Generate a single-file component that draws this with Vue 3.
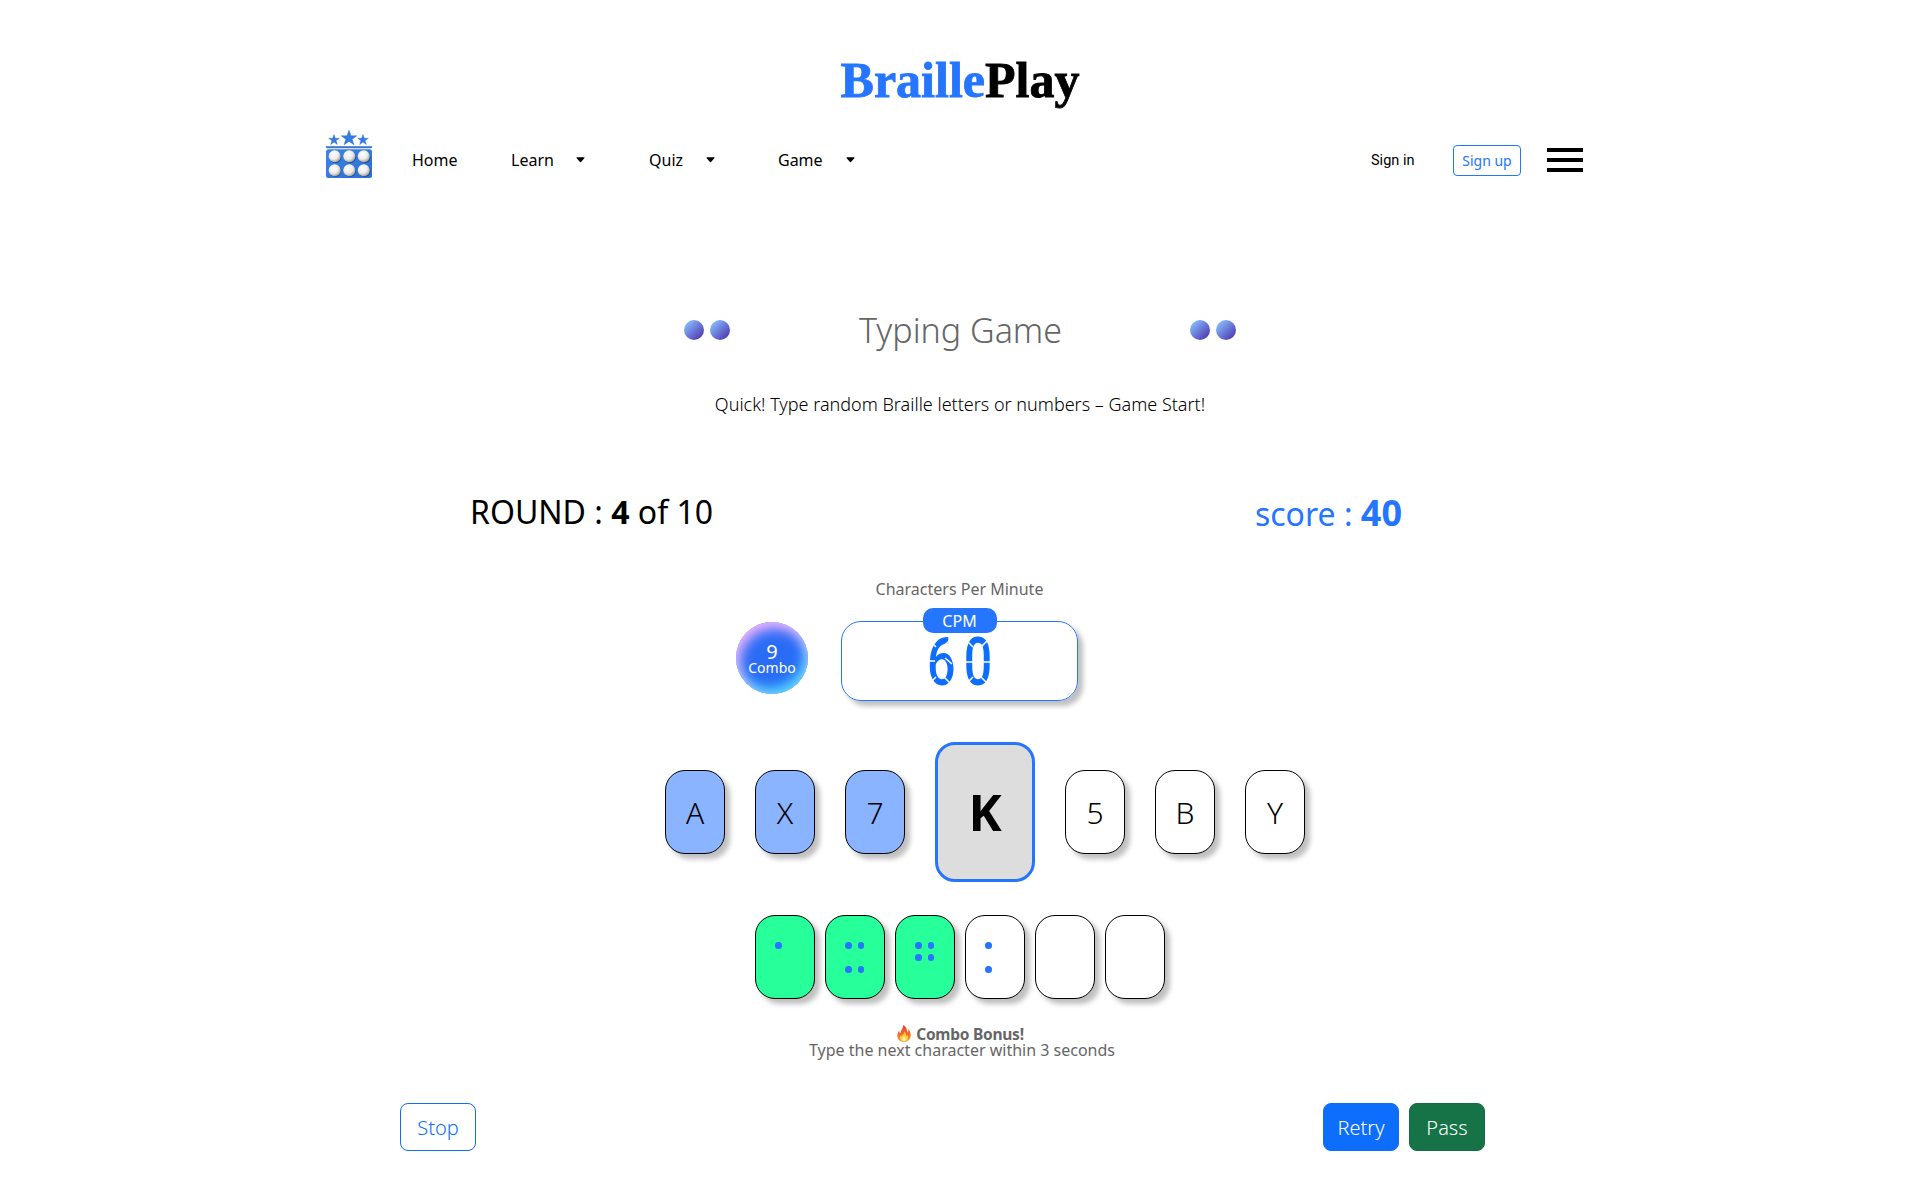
<script setup>
const menu = [
  { label: 'Home', width: 99, caret: false },
  { label: 'Learn', width: 138, caret: true, gap: 22 },
  { label: 'Quiz', width: 129, caret: true, gap: 23 },
  { label: 'Game', width: 80, caret: true, gap: 23 },
]
const letters = [
  { char: 'A', state: 'done' },
  { char: 'X', state: 'done' },
  { char: '7', state: 'done' },
  { char: 'K', state: 'current' },
  { char: '5', state: '' },
  { char: 'B', state: '' },
  { char: 'Y', state: '' },
]
// Each cell lists its six dots row by row.
const cells = [
  { dots: [1, 0, 0, 0, 0, 0], correct: true },
  { dots: [1, 1, 0, 0, 1, 1], correct: true },
  { dots: [1, 1, 1, 1, 0, 0], correct: true },
  { dots: [1, 0, 0, 0, 1, 0], correct: false },
  { dots: [0, 0, 0, 0, 0, 0], correct: false },
  { dots: [0, 0, 0, 0, 0, 0], correct: false },
]
</script>

<template>
  <div class="page">
    <header>
      <div class="wordmark"><span class="blue">Braille</span><span>Play</span></div>
      <nav>
        <svg class="logo" width="48" height="50" viewBox="0 0 48 50">
          <defs>
            <radialGradient id="ball" cx="0.4" cy="0.35" r="0.65">
              <stop offset="0" stop-color="#fff" />
              <stop offset="0.6" stop-color="#eeecea" />
              <stop offset="1" stop-color="#aaa59f" />
            </radialGradient>
            <linearGradient id="plate" x1="0" y1="0" x2="1" y2="1">
              <stop offset="0" stop-color="#3b86e8" />
              <stop offset="1" stop-color="#2a6fd2" />
            </linearGradient>
          </defs>
          <g fill="#317de4" stroke="#2a65b5" stroke-width="0.4">
            <path d="M24 .2l2 5.600h5.800l-4.600 3.400 1.800 5.600L24 11.400l-5 3.400 1.800-5.600L16.200 5.800h5.800z" />
            <path d="M9 4.500l1.300 3.800h4l-3.200 2.300 1.200 3.900-3.300-2.400-3.300 2.400 1.200-3.900-3.200-2.300h4z" />
            <path d="M38 4.500l1.300 3.800h4l-3.200 2.300 1.200 3.900-3.300-2.400-3.300 2.400 1.200-3.900-3.200-2.300h4z" />
          </g>
          <rect x="1" y="16.200" width="46" height="1.600" fill="#2f78da" />
          <rect x="1.500" y="17.600" width="45" height="0.600" fill="#245196" />
          <rect x="1" y="19.300" width="46" height="28.700" rx="2.500" fill="url(#plate)" />
          <g fill="#174b98" opacity="0.75">
            <circle cx="10.300" cy="27.200" r="6.100" /><circle cx="25" cy="27.200" r="6.100" /><circle cx="39.600" cy="27.200" r="6.100" />
            <circle cx="10.300" cy="41" r="6.100" /><circle cx="25" cy="41" r="6.100" /><circle cx="39.600" cy="41" r="6.100" />
          </g>
          <g fill="url(#ball)">
            <circle cx="9.700" cy="26.200" r="6" /><circle cx="24.300" cy="26.200" r="6" /><circle cx="38.800" cy="26.200" r="6" />
            <circle cx="9.700" cy="40.200" r="6" /><circle cx="24.300" cy="40.200" r="6" /><circle cx="38.800" cy="40.200" r="6" />
          </g>
        </svg>
        <ul class="menu">
          <li v-for="m in menu" :key="m.label" :style="{ width: m.width + 'px' }">
            {{ m.label }}
            <svg v-if="m.caret" :style="{ marginLeft: m.gap + 'px' }" width="9" height="6" viewBox="0 0 9 6">
              <path d="M.5 1Q.3 .3 1 .3H8Q8.700 .3 8.500 1L5 5Q4.500 5.500 4 5Z" />
            </svg>
          </li>
        </ul>
        <a class="signin">Sign in</a>
        <button class="signup">Sign up</button>
        <div class="burger"><i></i><i></i><i></i></div>
      </nav>
    </header>

    <div class="title">
      <div class="pair"><i></i><i></i></div>
      <h1>Typing Game</h1>
      <div class="pair"><i></i><i></i></div>
    </div>
    <p class="intro">Quick! Type random Braille letters or numbers – Game Start!</p>

    <div class="stats">
      <div class="round">ROUND : <b>4</b> of 10</div>
      <div class="score">score : <b>40</b></div>
    </div>

    <p class="caption">Characters Per Minute</p>
    <div class="meter">
      <div class="combo"><span class="count">9</span><span>Combo</span></div>
      <div class="cpm">
        <div class="tag">CPM</div>
        <svg class="readout" width="64" height="49" viewBox="0 0 64 49">
          <g transform="translate(-1 47.200) scale(0.760 1)">
            <text x="0" y="0">6</text>
            <text x="48.500" y="0">0</text>
          </g>
          <g class="cuts">
            <path d="M0 1L8 9M23 1L16 8M0 47L8 39M24 47L16 39M0 23H7M17 20L24 26" />
            <path d="M37 1L45 9M61 1L53 9M37 47L45 39M61 47L53 39M36 24H45M53 24H62" />
          </g>
        </svg>
      </div>
    </div>

    <div class="letters">
      <div v-for="l in letters" :key="l.char" class="card" :class="l.state">{{ l.char }}</div>
    </div>

    <div class="cells">
      <div v-for="(c, n) in cells" :key="n" class="card cell" :class="{ correct: c.correct }">
        <i v-for="(d, k) in c.dots" :key="k" :class="{ on: d }"></i>
      </div>
    </div>

    <div class="bonus">
      <div class="bonus-head">
        <svg width="14" height="17" viewBox="0 0 14 17">
          <defs>
            <linearGradient id="flame" x1="0" y1="0" x2="0" y2="1">
              <stop offset="0" stop-color="#e8402a" />
              <stop offset="0.6" stop-color="#ff6a2a" />
              <stop offset="1" stop-color="#ff9a2e" />
            </linearGradient>
          </defs>
          <path fill="url(#flame)" d="M6 0C10 2 10 5 10.300 7.500 11.300 6.800 11.400 5.400 11.200 4 13.500 6.500 14 9.500 13.600 11.500 13 15 10.500 16.800 7 16.800S.8 15 .4 11.500C.1 9 1.200 7 2.200 5.400 2.200 7 2.600 7.900 3.600 8.300 3.400 5.300 6.600 3.500 6 0Z" />
          <path fill="#ffd23c" d="M7.200 6.500C9.600 8.500 9 10 9.600 11.200 10.300 10.800 10.600 10 10.600 9.400 12 12 11 16.200 7 16.200S2.200 12.500 3.400 10C3.700 11 4.200 11.400 4.800 11.500 5 9.500 7.600 9 7.200 6.500Z" />
          <path fill="#fff6b8" d="M7 11.500C9.500 13.500 9 16 7 16S4.600 13.800 7 11.500Z" />
        </svg>
        <b>Combo Bonus!</b>
      </div>
      <div>Type the next character within 3 seconds</div>
    </div>

    <footer>
      <button class="stop">Stop</button>
      <button class="retry">Retry</button>
      <button class="pass">Pass</button>
    </footer>
  </div>
</template>

<style>
body { margin: 0; background: #fff; }
</style>

<style scoped>
* { box-sizing: border-box; }
.page {
  width: 1920px; height: 1200px; overflow: hidden;
  display: flex; flex-direction: column; align-items: center;
  font-family: "Noto Sans", sans-serif; font-size: 16px; color: #000; background: #fff;
}
p, h1, ul { margin: 0; padding: 0; }
b { font-weight: 700; }
button { font-family: inherit; padding: 0; background: none; }
.wordmark {
  height: 60px; margin-top: 50px; line-height: 60px; text-align: center;
  font-family: "Liberation Serif", serif; font-weight: 700; font-size: 50px;
  -webkit-text-stroke: 0.8px currentColor; white-space: nowrap;
}
.blue { color: #2575ff; }
nav { width: 1270px; height: 60px; margin-top: 20px; display: flex; align-items: center; }
.logo { margin-top: -10px; flex: none; }
.menu { display: flex; list-style: none; margin-left: 39px; flex: 1; }
.menu li { display: flex; align-items: center; line-height: 22px; white-space: nowrap; }
.signin { font-family: Roboto, sans-serif; font-size: 14.500px; width: 82px; white-space: nowrap; }
.signup {
  width: 68px; height: 31px; border: 1px solid #2575ff; border-radius: 4px;
  color: #2575ff; font-size: 14px;
}
.burger { display: flex; flex-direction: column; gap: 6px; margin: 0 12px 0 26px; }
.burger i { width: 36px; height: 4px; background: #000; }
.title { width: 552px; height: 60px; margin-top: 110px; display: flex; justify-content: space-between; align-items: center; }
.title h1 { font-size: 34px; font-weight: 300; color: #666; line-height: 60px; padding-left: 1px; }
.pair { display: flex; gap: 6px; margin-top: -1px; }
.pair i { width: 20px; height: 20px; border-radius: 50%; background: linear-gradient(135deg, #8ac0ff 10%, #4527a8 100%); }
.intro { font-size: 18px; font-weight: 300; line-height: 30px; margin-top: 29px; }
.stats { width: 980px; height: 50px; margin-top: 68px; display: flex; justify-content: space-between; }
.round, .score { font-size: 32px; line-height: 50px; white-space: nowrap; }
.score { color: #2575ff; padding: 1px 48px 0 0; }
.score b { font-size: 36px; }
.caption { color: #666; line-height: 22px; margin-top: 41px; padding-right: 1px; }
.meter { width: 448px; height: 80px; margin-top: 21px; display: flex; align-items: center; gap: 33px; align-self: flex-start; margin-left: 736px; }
.combo {
  width: 72px; height: 72px; border-radius: 50%; margin-top: -6px;
  display: flex; flex-direction: column; align-items: center; justify-content: center;
  color: #fff; font-size: 14px; line-height: 14px; background: #2a6cf6;
  box-shadow: inset 3px 6px 13px #f9b5ff, inset -3px -6px 12px #48d8ff;
}
.count { font-size: 20px; line-height: 19px; }
.cpm {
  width: 237px; height: 80px; border: 1px solid #2575ff; border-radius: 20px;
  box-shadow: 5px 5px 5px rgba(0, 0, 0, 0.25);
  display: flex; flex-direction: column; align-items: center;
}
.tag { width: 74px; height: 25px; margin-top: -14px; border-radius: 10px; background: #2575ff; color: #fff; text-align: center; line-height: 26px; }
.readout { margin-top: 5px; flex: none; overflow: visible; }
.readout text { font-family: Roboto, sans-serif; font-size: 66px; font-weight: 500; fill: #0d6efd; }
.cuts { fill: none; stroke: #fff; stroke-width: 1.600; }
.letters { display: flex; align-items: center; gap: 30px; height: 140px; margin: 41px 0 0 50px; }
.card {
  width: 60px; height: 84px; border: 1px solid #000; border-radius: 20px; background: #fff;
  box-shadow: 5px 5px 5px rgba(0, 0, 0, 0.25);
  display: flex; align-items: center; justify-content: center; font-size: 30px; font-weight: 300;
}
.done { background: #8ab4ff; }
.current { width: 100px; height: 140px; border: 3px solid #2575ff; background: #ddd; box-shadow: none; font-size: 50px; font-weight: 700; }
.cells { display: flex; gap: 10px; margin-top: 33px; }
.cell { display: grid; grid-template-columns: 6.500px 6.500px; grid-auto-rows: 7px; gap: 5px 6.200px; align-content: start; align-items: stretch; justify-content: start; padding: 26px 0 0 19px; }
.cell i { border-radius: 50%; }
.cell i.on { background: #2575ff; }
.correct { background: #26ff9a; }
.bonus { margin: 27px 0 0 4px; text-align: center; color: #666; line-height: 16px; white-space: nowrap; }
.bonus-head { display: flex; justify-content: center; gap: 5px; height: 16px; padding-right: 3px; }
.bonus-head b { font-size: 15.500px; letter-spacing: -0.250px; }
.bonus-head svg { margin-top: -1px; }
footer { width: 1085px; margin: 45px 35px 0 0; display: flex; gap: 10px; }
footer button { width: 76px; height: 48px; border-radius: 8px; border: 1px solid #0d6efd; font-size: 20px; font-weight: 300; color: #fff; }
.stop { color: #0d6efd; margin-right: auto; }
.retry { background: #0d6efd; }
.pass { background: #157347; border-color: #146c43; }
</style>
